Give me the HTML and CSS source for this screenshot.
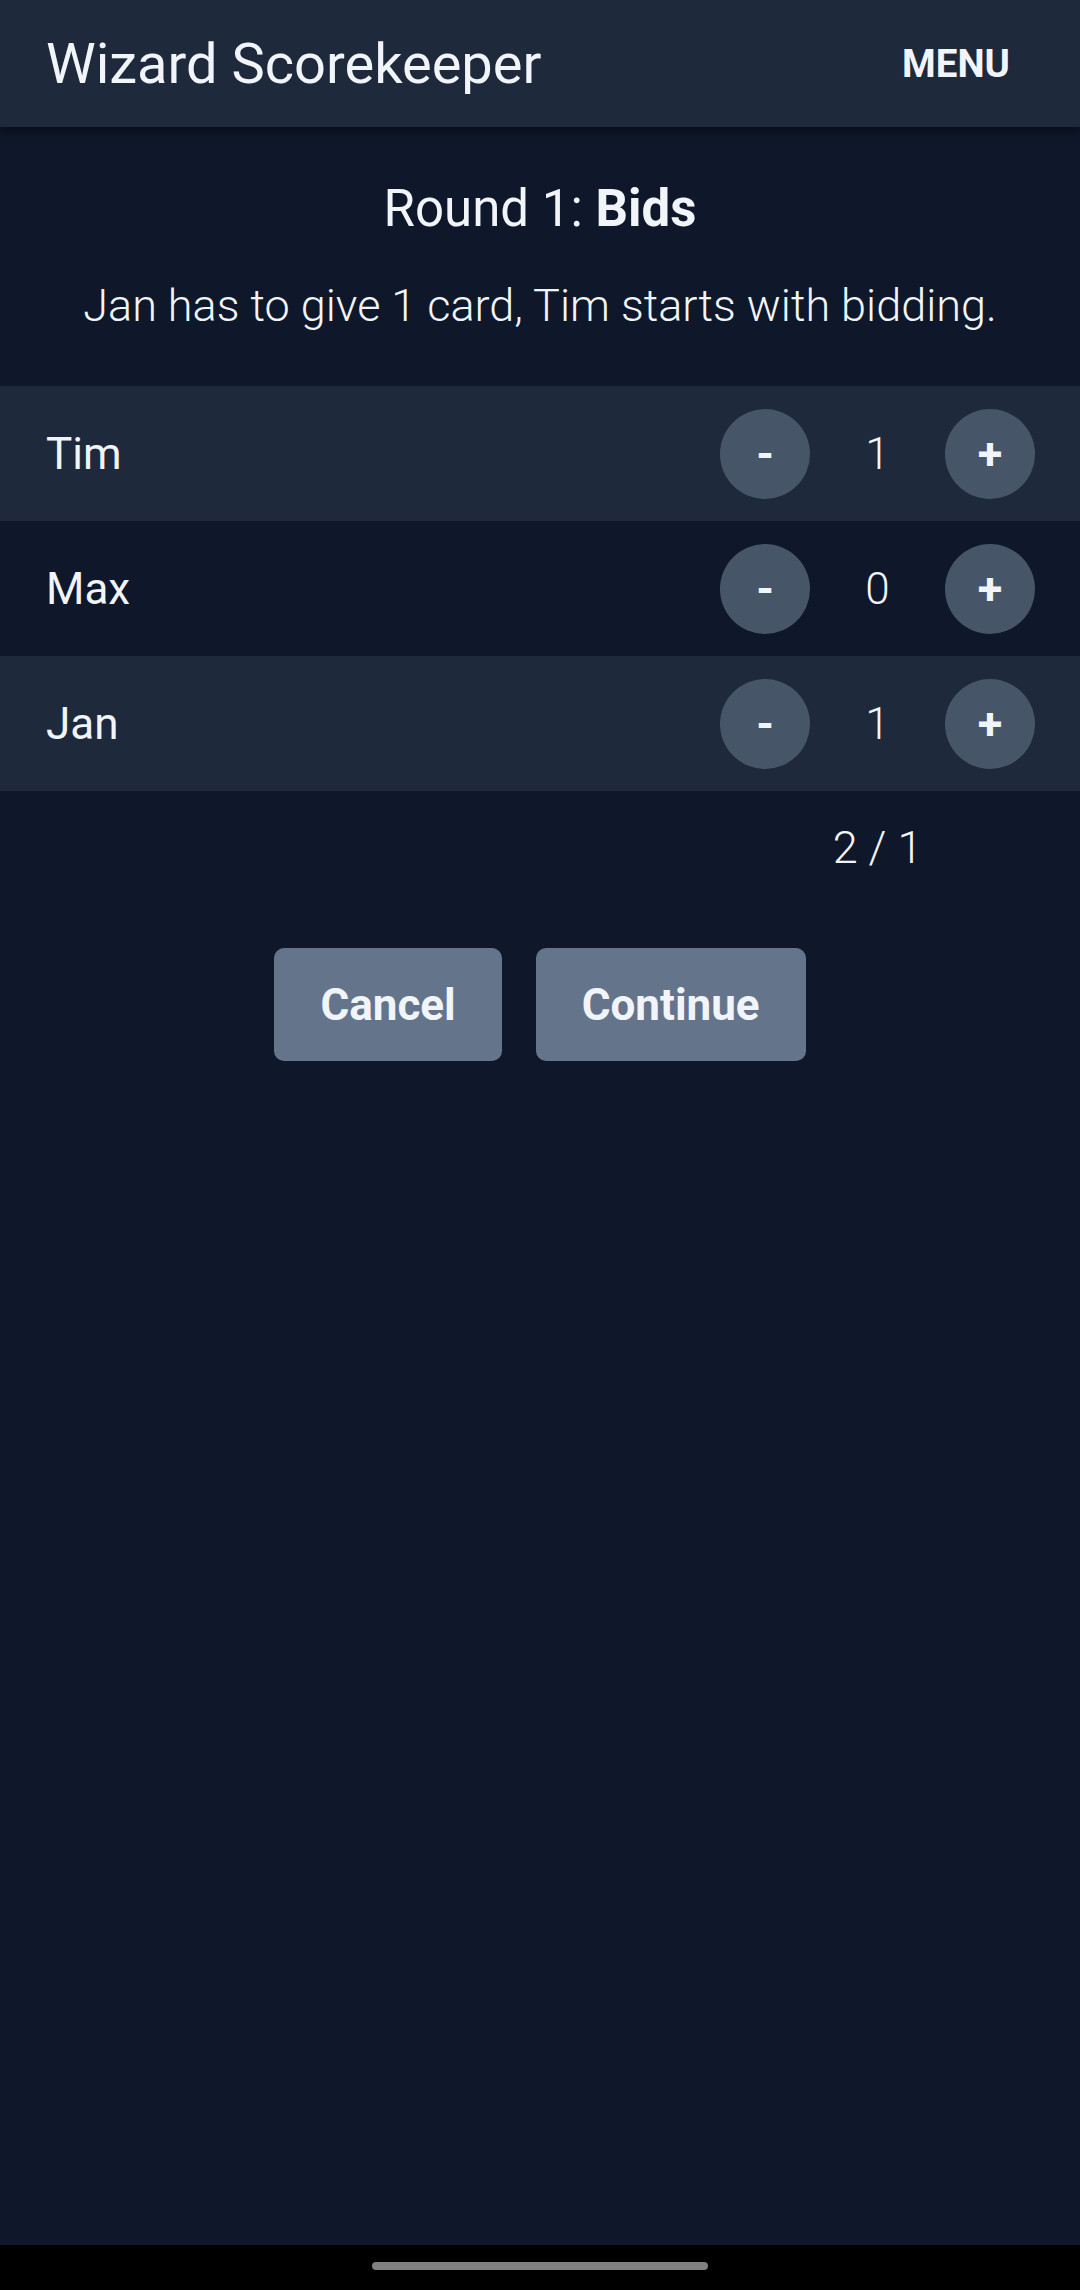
FILE: index.html
```html
<!DOCTYPE html>
<html lang="en">
<head>
<meta charset="utf-8">
<title>Wizard Scorekeeper</title>
<link rel="stylesheet" href="styles.css">
</head>
<body>
<div class="app">
  <header class="topbar">
    <h1 class="brand">Wizard Scorekeeper</h1>
    <button class="menu-btn">MENU</button>
  </header>
  <main class="content">
    <h2 class="round-title">Round 1: <strong>Bids</strong></h2>
    <p class="round-info">Jan has to give 1 card, Tim starts with bidding.</p>
    <div class="players">
      <div class="player-row alt">
        <span class="player-name">Tim</span>
        <div class="stepper">
          <button class="step-btn">-</button>
          <span class="step-value">1</span>
          <button class="step-btn">+</button>
        </div>
      </div>
      <div class="player-row">
        <span class="player-name">Max</span>
        <div class="stepper">
          <button class="step-btn">-</button>
          <span class="step-value">0</span>
          <button class="step-btn">+</button>
        </div>
      </div>
      <div class="player-row alt">
        <span class="player-name">Jan</span>
        <div class="stepper">
          <button class="step-btn">-</button>
          <span class="step-value">1</span>
          <button class="step-btn">+</button>
        </div>
      </div>
    </div>
    <div class="total-row">
      <span class="total-value">2 / 1</span>
    </div>
    <div class="actions">
      <button class="action-btn cancel">Cancel</button>
      <button class="action-btn continue">Continue</button>
    </div>
  </main>
  <div class="navbar"><span class="home-pill"></span></div>
</div>
</body>
</html>
```
FILE: styles.css
```css
* { box-sizing: border-box; }
html, body {
  margin: 0;
  padding: 0;
  background: #0f172a;
}
body {
  font-family: Roboto, "Noto Sans", "Liberation Sans", sans-serif;
  color: #f1f5f9;
}
.app {
  display: flex;
  flex-direction: column;
  height: 2290px;
  width: 1080px;
}
.topbar {
  position: relative;
  z-index: 2;
  height: 127px;
  flex: 0 0 127px;
  background: #1e293b;
  display: flex;
  align-items: center;
  justify-content: space-between;
  padding: 0 70px 0 46px;
  box-shadow: 0 3px 10px rgba(0, 0, 0, 0.55);
}
.brand {
  margin: 0;
  font-size: 56px;
  font-weight: 400;
  line-height: 66px;
  color: #f1f5f9;
}
.menu-btn {
  background: none;
  border: 0;
  padding: 0;
  font-family: inherit;
  font-size: 38.5px;
  font-weight: 700;
  color: #f1f5f9;
  line-height: 46px;
}
.content {
  flex: 1;
  display: flex;
  flex-direction: column;
  padding-top: 52px;
}
.round-title {
  margin: 0;
  text-align: center;
  font-size: 51px;
  line-height: 60px;
  font-weight: 400;
}
.round-title strong { font-weight: 700; }
.round-info {
  margin: 40px 0 0;
  text-align: center;
  font-size: 45px;
  line-height: 54px;
  font-weight: 300;
}
.players {
  margin-top: 53px;
  display: flex;
  flex-direction: column;
}
.player-row {
  height: 135px;
  display: flex;
  align-items: center;
  justify-content: space-between;
  padding: 0 45px 0 46px;
}
.player-row.alt { background: #1e293b; }
.player-name {
  font-size: 44px;
  font-weight: 400;
}
.stepper {
  display: flex;
  align-items: center;
}
.step-btn {
  width: 90px;
  height: 90px;
  border-radius: 50%;
  border: 0;
  padding: 0;
  background: #475569;
  color: #f1f5f9;
  font-family: inherit;
  font-size: 45px;
  font-weight: 700;
  line-height: 90px;
}
.step-value {
  width: 135px;
  text-align: center;
  font-size: 44px;
  font-weight: 300;
}
.total-row {
  margin-top: 30px;
  display: flex;
  justify-content: flex-end;
  padding-right: 135px;
}
.total-value {
  width: 135px;
  text-align: center;
  font-size: 45px;
  line-height: 54px;
  font-weight: 300;
  white-space: nowrap;
}
.actions {
  margin-top: 73px;
  display: flex;
  justify-content: center;
  gap: 34px;
}
.action-btn {
  height: 113px;
  padding: 0 46px;
  border: 0;
  border-radius: 10px;
  background: #64748b;
  color: #f1f5f9;
  font-family: inherit;
  font-size: 44px;
  font-weight: 700;
}
.navbar {
  flex: 0 0 45px;
  background: #000;
  display: flex;
  justify-content: center;
  padding-top: 17px;
}
.home-pill {
  width: 336px;
  height: 8px;
  border-radius: 4px;
  background: #808080;
}
```
